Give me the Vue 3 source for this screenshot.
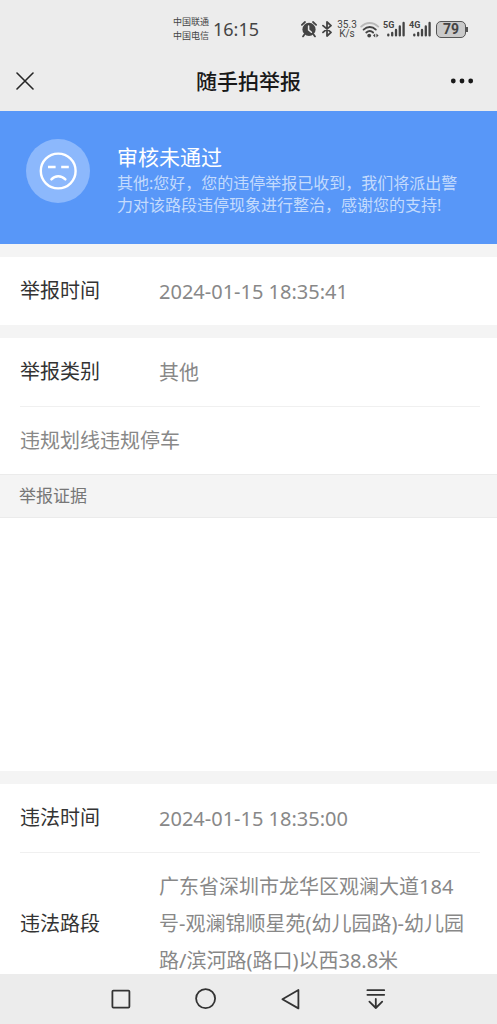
<script setup>
const notice = {
  title: '审核未通过',
  text: '其他:您好，您的违停举报已收到，我们将派出警力对该路段违停现象进行整治，感谢您的支持!',
}
const networks = ['5G', '4G']
</script>

<template>
  <div class="screen">
    <div class="status">
      <div class="status-left">
        <div class="carriers">
          <span>中国联通</span>
          <span>中国电信</span>
        </div>
        <time class="clock">16:15</time>
      </div>
      <div class="status-right">
        <svg class="alarm" width="16" height="18" viewBox="0 0 16 18" aria-hidden="true">
          <circle cx="8" cy="9.4" r="6.6" fill="#444" />
          <path d="M.9 4.8 4 2M15.1 4.8 12 2M3.4 14.4 2 16.4M12.6 14.4l1.4 2" fill="none" stroke="#444" stroke-width="1.8" stroke-linecap="round" />
          <path d="M7.6 5.9v4l2.8 2.4" fill="none" stroke="#ececec" stroke-width="1.5" stroke-linecap="round" />
        </svg>
        <svg class="bluetooth" width="10" height="16" viewBox="0 0 10 16" aria-hidden="true">
          <path d="M1 4.6 9 11.4 5 15V1l4 3.6L1 11.4" fill="none" stroke="#444" stroke-width="1.8" stroke-linejoin="round" stroke-linecap="round" />
        </svg>
        <div class="speed">
          <span>35.3</span>
          <span>K/s</span>
        </div>
        <svg class="wifi" width="20" height="17" viewBox="0 0 20 17" aria-hidden="true">
          <g fill="none" stroke-width="1.9" stroke-linecap="round">
            <path d="M1.2 5.6c5-4.8 12-4.8 17 0" stroke="#b9b9b9" />
            <path d="M3.6 8.6c3.7-3.4 8.7-3.4 12.2 0M6.3 11.5c2.2-1.9 4.8-1.9 6.8 0" stroke="#444" />
          </g>
          <circle cx="9.2" cy="14.6" r="1.9" fill="#444" />
          <path d="M15.2 12.4v4l-2.2-2zM16.4 12.4v4l2.2-2z" fill="#444" />
        </svg>
        <div v-for="n in networks" :key="n" class="signal">
          <span>{{ n }}</span>
          <svg width="21" height="16" viewBox="0 0 21 16" aria-hidden="true">
            <path d="M4.3 13.6v.8M8.2 12v2.4M12 9v5.4M15.8 5.5v8.9M19.6 2v12.4" fill="none" stroke="#444" stroke-width="2.3" stroke-linecap="round" />
          </svg>
        </div>
        <div class="battery"><span>79</span></div>
      </div>
    </div>

    <header class="titlebar">
      <button type="button" aria-label="关闭">
        <svg width="18" height="18" viewBox="0 0 18 18" aria-hidden="true">
          <path d="M1 1l16 16M17 1 1 17" stroke="#262626" stroke-width="1.6" fill="none" stroke-linecap="round" />
        </svg>
      </button>
      <h1>随手拍举报</h1>
      <button type="button" class="more" aria-label="更多">
        <svg width="24" height="6" viewBox="0 0 24 6" aria-hidden="true">
          <g fill="#191919">
            <circle cx="3.3" cy="3" r="2.4" /><circle cx="12" cy="3" r="2.4" /><circle cx="20.7" cy="3" r="2.4" />
          </g>
        </svg>
      </button>
    </header>

    <main>
      <section class="notice">
        <svg class="face" width="64" height="64" viewBox="0 0 64 64" aria-hidden="true">
          <circle cx="32" cy="32" r="32" fill="#8cb8fc" />
          <g fill="none" stroke="#fff" stroke-width="2.4">
            <circle cx="32.2" cy="32" r="17.4" />
            <path d="M22 28h7.6M35.2 28h7.6" />
            <path d="M25.4 40.4c3.6-4.2 10-4.2 14 0" stroke-linecap="round" />
          </g>
        </svg>
        <div class="notice-body">
          <h2>{{ notice.title }}</h2>
          <p>{{ notice.text }}</p>
        </div>
      </section>

      <dl class="group">
        <div class="row"><dt>举报时间</dt><dd>2024-01-15 18:35:41</dd></div>
      </dl>

      <dl class="group">
        <div class="row"><dt>举报类别</dt><dd>其他</dd></div>
        <div class="row"><dd>违规划线违规停车</dd></div>
      </dl>

      <h3>举报证据</h3>
      <div class="evidence"></div>

      <dl class="group">
        <div class="row"><dt>违法时间</dt><dd>2024-01-15 18:35:00</dd></div>
        <div class="row">
          <dt>违法路段</dt>
          <dd>广东省深圳市龙华区观澜大道184号-观澜锦顺星苑(幼儿园路)-幼儿园路/滨河路(路口)以西38.8米</dd>
        </div>
      </dl>
    </main>

    <nav>
      <button type="button" aria-label="最近任务">
        <svg width="22" height="22" viewBox="0 0 22 22"><rect x="2.4" y="2.6" width="17" height="17" rx="1" /></svg>
      </button>
      <button type="button" aria-label="主页">
        <svg width="22" height="22" viewBox="0 0 22 22"><circle cx="10.6" cy="10.6" r="9.5" /></svg>
      </button>
      <button type="button" aria-label="返回">
        <svg width="22" height="22" viewBox="0 0 22 22"><path d="M18.4 2v18.4L2.4 11.2z" /></svg>
      </button>
      <button type="button" aria-label="下拉通知">
        <svg width="22" height="22" viewBox="0 0 22 22"><path d="M2.4 2.2h16.8M2.4 6.8h16.8M10.8 11v9M4.4 13.6 10.8 20l6.4-6.4" /></svg>
      </button>
    </nav>
  </div>
</template>

<style>
body {
  margin: 0;
}
</style>

<style scoped>
.screen {
  display: flex;
  flex-direction: column;
  height: 100vh;
  background: #ececec;
  color: #333;
  font-family: "Noto Sans", "Noto Sans CJK SC", sans-serif;
}
h1, h2, h3, p, dl, dt, dd {
  margin: 0;
  font-weight: 400;
}
button {
  display: flex;
  align-items: center;
  justify-content: center;
  padding: 0;
  border: 0;
  background: none;
}
.status {
  display: flex;
  justify-content: space-between;
  align-items: center;
  height: 54px;
  padding: 4px 29px 0 173px;
  box-sizing: border-box;
  flex: none;
  color: #444;
}
.status-left, .status-right {
  display: flex;
  align-items: center;
}
.status-left {
  gap: 4px;
}
.carriers, .speed {
  display: flex;
  flex-direction: column;
}
.carriers {
  font-size: 9px;
  line-height: 14px;
  white-space: nowrap;
  font-family: "Noto Sans CJK SC", sans-serif;
}
.clock {
  font-size: 18px;
  line-height: 24px;
}
.alarm {
  margin-right: 5px;
}
.bluetooth {
  margin-right: 5px;
}
.speed {
  width: 20px;
  margin-right: 3px;
  align-items: center;
  font: 10px/9px Roboto, sans-serif;
}
.wifi {
  margin-right: 4px;
}
.signal {
  position: relative;
  display: flex;
  margin-right: 5px;
}
.signal span {
  position: absolute;
  left: -1px;
  top: 0;
  font: 700 9px/9px Roboto, sans-serif;
}
.battery {
  position: relative;
  width: 30px;
  height: 17px;
  margin-right: 2px;
  box-sizing: border-box;
  border: 1px solid #555;
  border-radius: 5px;
  background: #cacaca;
  text-align: center;
  font: 700 14px/15px Roboto, sans-serif;
}
.battery::after {
  content: "";
  position: absolute;
  right: -3px;
  top: 5px;
  width: 2px;
  height: 5px;
  background: #555;
}
.titlebar {
  display: grid;
  grid-template-columns: 1fr auto 1fr;
  align-items: center;
  height: 57px;
  padding: 0 16px 4px;
  box-sizing: border-box;
  flex: none;
}
.titlebar button {
  height: 32px;
  justify-self: start;
}
.titlebar .more {
  justify-self: end;
  margin-right: 7px;
}
.titlebar h1 {
  color: #191919;
  font-size: 21px;
  line-height: 32px;
  font-weight: 500;
}
main {
  flex: 1;
  min-height: 0;
  overflow-y: auto;
  scrollbar-width: none;
  background: #f4f4f4;
}
.notice {
  display: flex;
  gap: 27px;
  min-height: 133px;
  padding: 28px 32px 24px 26px;
  box-sizing: border-box;
  background: #5897f8;
  color: #fff;
}
.face {
  flex: none;
}
.notice-body {
  padding-top: 3px;
}
.notice h2 {
  font-size: 21px;
  line-height: 30px;
}
.notice p {
  color: #c4dbfd;
  font-size: 16px;
  line-height: 22px;
}
.group {
  margin-top: 13px;
  background: #fff;
}
.row {
  display: flex;
  align-items: center;
  margin: 0 17px 0 20px;
  padding: 15px 0;
  font-size: 20px;
  line-height: 38px;
}
.row + .row {
  border-top: 1px solid #f0f0f0;
}
.row dt {
  flex: none;
  width: 139px;
}
.row dd {
  padding-right: 8px;
  color: #888;
  line-height: 37px;
}
h3 {
  padding: 0 19px;
  border: solid #ebebeb;
  border-width: 1px 0;
  color: #777;
  font-size: 17px;
  line-height: 42px;
}
.evidence {
  height: 253px;
  background: #fff;
}
nav {
  display: flex;
  justify-content: center;
  gap: 63px;
  height: 50px;
  flex: none;
}
nav svg {
  fill: none;
  stroke: #333;
  stroke-width: 1.8;
  stroke-linejoin: round;
  stroke-linecap: round;
}
</style>
